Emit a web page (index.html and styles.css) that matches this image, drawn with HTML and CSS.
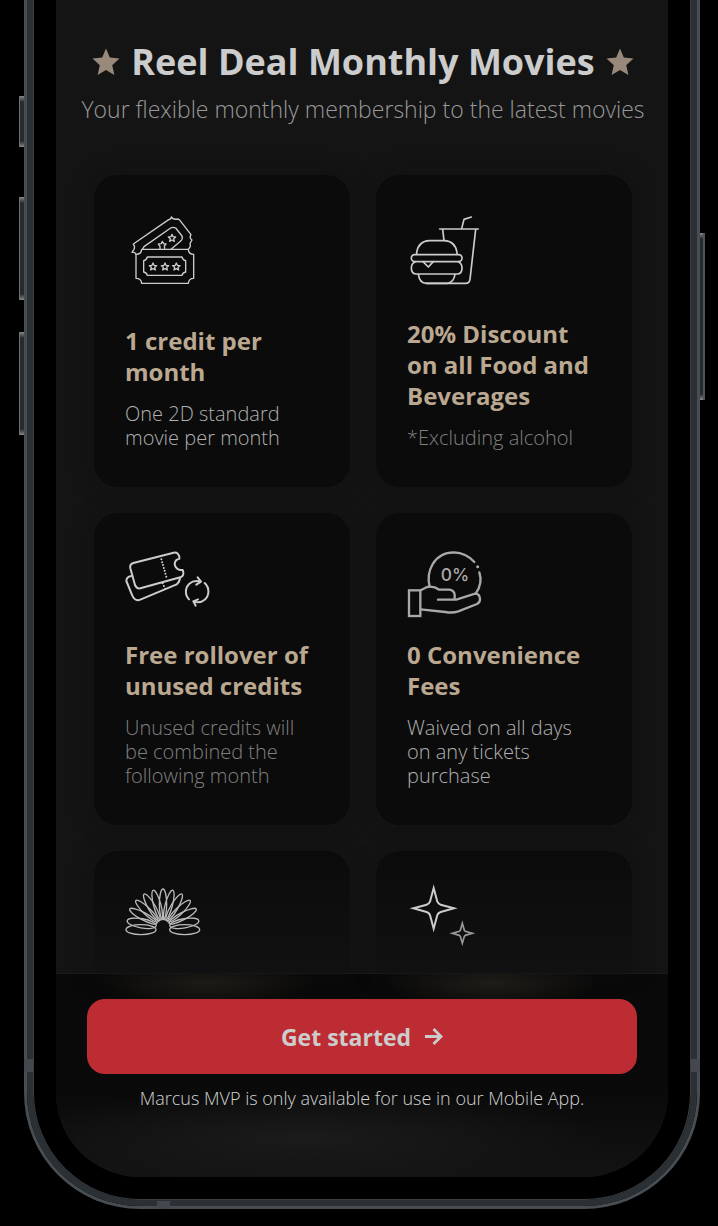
FILE: index.html
```html
<!DOCTYPE html>
<html lang="en">
<head>
<meta charset="utf-8">
<meta name="viewport" content="width=device-width, initial-scale=1">
<title>Reel Deal Monthly Movies</title>
<link rel="stylesheet" href="styles.css">
</head>
<body>
<div class="phone">
  <span class="key key-mute"></span>
  <span class="key key-up"></span>
  <span class="key key-down"></span>
  <span class="key key-power"></span>
  <span class="seam seam-left"></span>
  <span class="seam seam-right"></span>
  <span class="seam seam-bottom"></span>
  <div class="rim"><div class="bezel"><div class="screen">
    <main class="content">
      <header class="intro">
        <h1 class="title">
          <svg class="star" viewBox="0 0 28 28" aria-hidden="true"><path d="M14 0.500 17.800 9.600 27.500 10.500 20.200 17.200 22.400 27 14 22 5.600 27 7.800 17.200 0.500 10.500 10.200 9.600Z"/></svg>
          <span>Reel Deal Monthly Movies</span>
          <svg class="star" viewBox="0 0 28 28" aria-hidden="true"><path d="M14 0.500 17.800 9.600 27.500 10.500 20.200 17.200 22.400 27 14 22 5.600 27 7.800 17.200 0.500 10.500 10.200 9.600Z"/></svg>
        </h1>
        <p class="subtitle">Your flexible monthly membership to the latest movies</p>
      </header>
      <section class="cards">
        <article class="card">
          <svg class="icon thin" viewBox="45 21 270 240" aria-hidden="true">
            <path d="M95 148H235Q236 163 251 163V235Q236 235 235 250H95Q94 235 78 235V163Q94 163 95 148Z"/>
            <path d="M112 171H216Q218 180 227 182V216Q218 218 216 226H112Q110 218 101 216V182Q110 180 112 171Z"/>
            <path d="M78 163Q75 155 66 157L72 148Q76 140 70 132L176 59Q184 58 184 51Q191 60 202 57L208 59L243 104Q237 114 246 120L240 130Q244 139 235 148"/>
            <path d="M98 147L102 140L182 84Q189 80 197 84L216 108Q219 117 213 122L184 147"/>
            <path id="tiny-star" d="M129 189 132 196 140 197 134 202 136 210 129 206 122 210 124 202 118 197 126 196Z"/>
            <use href="#tiny-star" x="36"/><use href="#tiny-star" x="70"/>
            <use href="#tiny-star" x="57" y="-86"/>
            <path d="M150 147 150 139 145 132 154 131 157 124 161 131 168 132 163 138 164 146"/>
          </svg>
          <div>
            <h2 class="card-title">1 credit per<br>month</h2>
            <p class="card-text">One 2D standard<br>movie per month</p>
          </div>
        </article>
        <article class="card">
          <svg class="icon" viewBox="33 21 270 240" aria-hidden="true">
            <path d="M131 87H247M197 86L204 58L226 51M140 88L144 121M239 88L222 238Q220 250 209 250H90"/>
            <path d="M62 163V157Q68 123 100 122H145Q177 123 183 157V163"/>
            <rect x="46" y="164" width="152" height="21" rx="10"/>
            <path d="M58 185Q46 190 46 204Q46 222 61 222H184Q198 222 198 204Q198 190 187 185M81 185L97 201L112 185M67 223Q71 250 91 250H154Q173 248 177 223"/>
          </svg>
          <div>
            <h2 class="card-title">20% Discount<br>on all Food and<br>Beverages</h2>
            <p class="card-text dim">*Excluding alcohol</p>
          </div>
        </article>
        <article class="card">
          <svg class="icon medium" viewBox="30 15 270 240" aria-hidden="true">
            <path d="M55 69L176 38Q189 36 193 50V56Q181 58 179 71Q180 86 195 90H203Q210 107 196 112L76 145Q65 147 60 135L46 85Q43 73 55 69Z"/>
            <path d="M49 108Q34 110 34 123L52 167Q60 185 76 179L185 133Q194 127 195 113"/>
            <path class="dotted" d="M139 58L155 114M143 130L151 148"/>
            <path d="M222 178C208 164 211 142 223 131Q237 119 256 125M248 112L258 125L244 134M269 129C285 144 283 167 269 179Q255 191 235 184M249 178L235 184L242 197"/>
          </svg>
          <div>
            <h2 class="card-title">Free rollover of<br>unused credits</h2>
            <p class="card-text dim">Unused credits will<br>be combined the<br>following month</p>
          </div>
        </article>
        <article class="card">
          <svg class="icon bold" viewBox="33 15 270 240" aria-hidden="true">
            <path d="M101 140C90 98 111 37 174 37Q210 38 235 66M250 97Q261 130 239 161"/>
            <path class="dot" d="M245 80V80"/>
            <rect x="39" y="151" width="34" height="77"/>
            <path d="M74 151L93 141Q112 137 130 149H160Q176 152 176 166V179M126 179H181L237 161Q252 161 252 178Q252 188 243 192L187 214Q170 220 148 216L74 208"/>
            <text class="icon-text" x="177" y="122" text-anchor="middle">0%</text>
          </svg>
          <div>
            <h2 class="card-title">0 Convenience<br>Fees</h2>
            <p class="card-text">Waived on all days<br>on any tickets<br>purchase</p>
          </div>
        </article>
        <article class="card cut">
          <svg class="icon hair" viewBox="30 24 270 240" aria-hidden="true">
            <ellipse id="loop" cx="144" cy="88" rx="11" ry="46"/>
            <use href="#loop" transform="rotate(-15 144 155)"/><use href="#loop" transform="rotate(15 144 155)"/>
            <use href="#loop" transform="rotate(-30 144 155)"/><use href="#loop" transform="rotate(30 144 155)"/>
            <use href="#loop" transform="rotate(-46 144 155)"/><use href="#loop" transform="rotate(46 144 155)"/>
            <use href="#loop" transform="rotate(-62 144 155)"/><use href="#loop" transform="rotate(62 144 155)"/>
            <ellipse cx="80" cy="145" rx="44" ry="14" transform="rotate(10 80 145)"/>
            <ellipse cx="208" cy="145" rx="44" ry="14" transform="rotate(-10 208 145)"/>
            <ellipse cx="78" cy="164" rx="45" ry="15"/>
            <ellipse cx="209" cy="164" rx="45" ry="15"/>
          </svg>
        </article>
        <article class="card cut">
          <svg class="icon bold" viewBox="18 24 270 240" aria-hidden="true">
            <path d="M98 39L109 80Q112 87 119 89L159 100L119 111Q112 113 109 120L98 161L87 120Q84 113 77 111L37 100L77 89Q84 87 87 80Z"/>
            <path class="faded" d="M184 145L190 166L193 169L214 175L193 181L190 184L184 205L178 184L175 181L154 175L175 169L178 166Z"/>
          </svg>
        </article>
      </section>
    </main>
    <footer class="bar">
      <button class="cta" type="button">
        <span>Get started</span>
        <svg class="arrow" viewBox="0 0 20 20" aria-hidden="true"><path d="M1 10H18M10 2L18 10L10 18"/></svg>
      </button>
      <p class="note">Marcus MVP is only available for use in our Mobile App.</p>
    </footer>
  </div></div></div>
</div>
</body>
</html>
```
FILE: styles.css
```css
* { box-sizing: border-box; }
body {
  margin: 0;
  background: #000;
  color: #ccc;
  font-family: "Open Sans", "Noto Sans", sans-serif;
}
h1, h2, p { margin: 0; }

/* Device shell */
.phone {
  position: relative;
  margin: 0 18px 17px 24px;
  border: solid #474d51;
  border-width: 0 3px 3px;
  border-radius: 0 0 116px 116px;
}
.rim {
  border: solid #2a3033;
  border-width: 0 6px 6px;
  border-radius: 0 0 113px 113px;
}
.bezel {
  padding: 0 22px 22px;
  border: solid #3c3f42;
  border-width: 0 1px 1px;
  border-radius: 0 0 107px 107px;
  background: #000;
}
.screen {
  overflow: hidden;
  border-radius: 0 0 84px 84px;
  background: #141414;
}
.key {
  position: absolute;
  left: -8px;
  width: 5px;
  background: linear-gradient(#85898b, #252c2f 6px, #252c2f calc(100% - 6px), #85898b);
  border-left: 1px solid #6d7173;
}
.key-mute { top: 96px; height: 51px; }
.key-up { top: 197px; height: 103px; }
.key-down { top: 332px; height: 103px; }
.key-power {
  top: 233px;
  left: auto;
  right: -8px;
  height: 167px;
  border-left: 0;
  border-right: 2px solid #4e5457;
}
.seam { position: absolute; background: #44484e; }
.seam-left, .seam-right { top: 1059px; width: 9px; height: 13px; }
.seam-left { left: -3px; }
.seam-right { right: -3px; }
.seam-bottom { left: 130px; bottom: -3px; width: 13px; height: 8px; }

/* Page content */
.content { padding: 40px 36px 0 38px; }
.intro {
  display: flex;
  flex-direction: column;
  align-items: center;
  gap: 8px;
  margin-bottom: 49px;
  white-space: nowrap;
}
.title {
  display: flex;
  align-items: center;
  gap: 11px;
  font-size: 36px;
  font-weight: 700;
  line-height: 44px;
}
.star { width: 28px; height: 28px; fill: #98897a; }
.subtitle {
  color: #999;
  font-size: 23px;
  font-weight: 300;
  line-height: 34px;
}
.cards {
  display: grid;
  grid-template-columns: 1fr 1fr;
  gap: 26px;
}
.card {
  display: flex;
  flex-direction: column;
  justify-content: space-between;
  min-height: 312px;
  padding: 32px 24px 37px 31px;
  border-radius: 24px;
  background: #0b0b0b;
  box-shadow: 0 0 20px #10101080;
}
.card.cut {
  min-height: 122px;
  padding-bottom: 10px;
  border-radius: 24px 24px 0 0;
  background: linear-gradient(#0b0b0b, #111);
}
.card-title {
  margin-bottom: 15px;
  color: #bba891;
  font-size: 24px;
  font-weight: 700;
  line-height: 31px;
  white-space: nowrap;
}
.card-text {
  color: #b0b0b0;
  font-size: 20px;
  font-weight: 300;
  line-height: 24px;
  white-space: nowrap;
}
.card-text.dim { color: #808080; }

/* Icons */
.icon {
  flex: none;
  width: 90px;
  height: 80px;
  fill: none;
  stroke: #ccc;
  stroke-width: 5;
  stroke-linecap: round;
  stroke-linejoin: round;
}
.icon.thin { stroke-width: 4; }
.icon.medium { stroke-width: 6; }
.icon.bold { stroke: #a9a9a9; stroke-width: 7; stroke-linejoin: miter; }
.icon.hair { stroke: #bbb; stroke-width: 4; }
.cut .icon.bold { stroke: #ccc; stroke-width: 6; }
.icon .faded { stroke: #999; stroke-width: 5; }
.icon .dotted { stroke-dasharray: 0 9; }
.icon .dot { stroke-width: 9; }
.icon-text {
  fill: #a9a9a9;
  stroke: none;
  font-family: Inter, sans-serif;
  font-size: 52px;
  font-weight: 500;
}

/* Bottom action bar */
.bar {
  padding: 25px 31px 67px;
  border-top: 1px solid #1c1b19;
  background:
    radial-gradient(ellipse 110px 26px at 150px 8px, #201d18, #201d1800),
    radial-gradient(ellipse 110px 26px at 436px 8px, #221f1a, #221f1a00),
    radial-gradient(ellipse 300px 50px at 250px 165px, #1b1b1b, #1b1b1b00),
    linear-gradient(#090909, #0a0a0a 60%, #131313);
}
.cta {
  display: flex;
  align-items: center;
  justify-content: center;
  gap: 13px;
  width: 100%;
  height: 75px;
  border: 0;
  border-radius: 18px;
  background: #bd2c33;
  color: #ccc;
  font: 700 23px/32px "Open Sans", "Noto Sans", sans-serif;
}
.arrow {
  width: 19px;
  height: 19px;
  fill: none;
  stroke: #ccc;
  stroke-width: 3;
}
.note {
  margin-top: 12px;
  color: #d2d2d2;
  font-size: 18px;
  font-weight: 300;
  line-height: 24px;
  text-align: center;
}
```
